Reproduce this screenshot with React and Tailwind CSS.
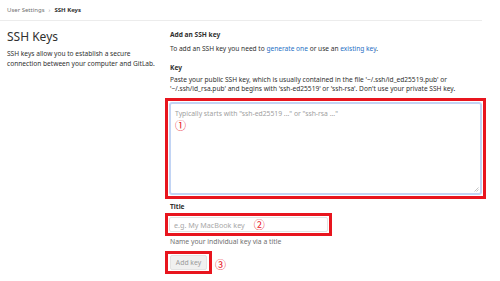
import React from 'react';

const Circled = ({ children, className = '' }) => (
  <span className={`text-[#e8151e] text-[11px] leading-none font-['Noto_Sans_CJK_JP',sans-serif] ${className}`}>
    {children}
  </span>
);

export default function App() {
  return (
    <div className="w-[500px] h-[281px] bg-white overflow-hidden font-['Noto_Sans',sans-serif] text-[#303030]">
      {/* breadcrumb */}
      <div className="w-[482px] h-[21px] border-b border-[#ececec] flex items-center pl-[7px] gap-[4px] text-[6px]">
        <span className="text-[#707070]">User Settings</span>
        <span className="text-[#999] text-[6px]">›</span>
        <span className="font-bold text-[#303030]">SSH Keys</span>
      </div>

      <div className="flex pl-[7px]">
        {/* left column */}
        <div className="w-[163px] pt-[8px]">
          <h4 className="text-[12px] leading-[16px] font-normal">SSH Keys</h4>
          <p className="mt-[4px] text-[6.6px] leading-[10px] w-[152px]">
            SSH keys allow you to establish a secure connection between your computer and GitLab.
          </p>
        </div>

        {/* right column */}
        <div className="w-[312px] pt-[9px] text-[6.6px] leading-[10px]">
          <div className="font-bold">Add an SSH key</div>
          <p className="mt-[4px]">
            To add an SSH key you need to <span className="text-[#1f6fc5]">generate one</span> or use an{' '}
            <span className="text-[#1f6fc5]">existing key</span>.
          </p>
          <div className="mt-[9px] font-bold">Key</div>
          <p className="mt-[2px] leading-[9px]">
            Paste your public SSH key, which is usually contained in the file '~/.ssh/id_ed25519.pub' or
            '~/.ssh/id_rsa.pub' and begins with 'ssh-ed25519' or 'ssh-rsa'. Don't use your private SSH key.
          </p>

          <div className="mt-[5px] -ml-[5px] w-[321px] h-[101px] border-[3px] border-[#e8151e] p-[1px]">
            <div className="w-full h-full border-2 border-[#c2d4f4] rounded-[3px] px-[4px] pt-[5px] relative">
              <div className="text-[#a0a0a0] text-[6.8px] leading-[10px]">
                Typically starts with "ssh-ed25519 ..." or "ssh-rsa ..."
              </div>
              <Circled className="block mt-[1px]">①</Circled>
              <svg className="absolute right-[1px] bottom-[1px]" width="5" height="5" viewBox="0 0 5 5">
                <path d="M4.5 0.5 L0.5 4.5 M4.5 2.5 L2.5 4.5" stroke="#b5b5b5" strokeWidth="0.8" />
              </svg>
            </div>
          </div>

          <div className="mt-[3px] font-bold">Title</div>
          <div className="mt-[1px] flex items-center">
            <div className="-ml-[5px] w-[167px] h-[23px] border-[3px] border-[#e8151e] p-[1px]">
              <div className="w-full h-full border border-[#e3e3e3] rounded-[2px] flex items-center pl-[4px] gap-[9px]">
                <span className="text-[#a8a8a8] text-[7.2px]">e.g. My MacBook key</span>
                <Circled>②</Circled>
              </div>
            </div>
          </div>
          <p className="mt-[1px] text-[#707070] text-[6.8px]">Name your individual key via a title</p>

          <div className="mt-[4px] flex items-center">
            <div className="-ml-[5px] w-[47px] h-[23px] border-[3px] border-[#e8151e] p-[1px] pl-[2px]">
              <div className="w-[37px] h-full bg-[#f0f0f0] border border-[#e3e3e3] rounded-[2px] flex items-center justify-center text-[#9a9a9a] text-[6.8px]">
                Add key
              </div>
            </div>
            <Circled className="ml-[3px] mt-[4px]">③</Circled>
          </div>
        </div>
      </div>
    </div>
  );
}
